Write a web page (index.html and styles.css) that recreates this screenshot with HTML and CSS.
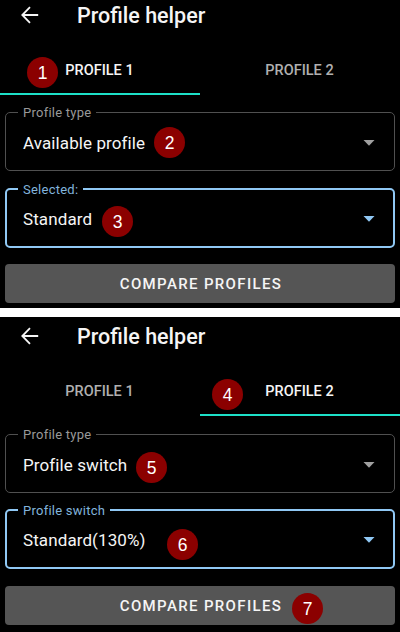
FILE: index.html
```
<!DOCTYPE html>
<html lang="en">
<head>
<meta charset="utf-8">
<title>Profile helper</title>
<link rel="stylesheet" href="styles.css">
</head>
<body>
<main>
  <section class="screen first">
    <header class="bar">
      <svg class="back" viewBox="0 0 18 18"><path d="M17.2 9H1.6M9 1.2L1.3 9L9 16.8"/></svg>
      <h1><span>Profile helper</span></h1>
    </header>
    <nav class="tabs">
      <div class="tab active"><span>PROFILE 1</span></div>
      <div class="tab"><span>PROFILE 2</span></div>
    </nav>
    <div class="form">
      <fieldset class="field">
        <legend><span>Profile type</span></legend>
        <div class="value"><span>Available profile</span><svg class="caret" viewBox="0 0 12 6"><path d="M0.5 0H11.5L6 5.7Z"/></svg></div>
      </fieldset>
      <fieldset class="field focused">
        <legend><span>Selected:</span></legend>
        <div class="value"><span>Standard</span><svg class="caret" viewBox="0 0 12 6"><path d="M0.5 0H11.5L6 5.7Z"/></svg></div>
      </fieldset>
      <button class="compare"><span>COMPARE PROFILES</span></button>
    </div>
    <b class="badge n1">1</b>
    <b class="badge n2">2</b>
    <b class="badge n3">3</b>
  </section>
  <section class="screen second">
    <header class="bar">
      <svg class="back" viewBox="0 0 18 18"><path d="M17.2 9H1.6M9 1.2L1.3 9L9 16.8"/></svg>
      <h1><span>Profile helper</span></h1>
    </header>
    <nav class="tabs">
      <div class="tab"><span>PROFILE 1</span></div>
      <div class="tab active"><span>PROFILE 2</span></div>
    </nav>
    <div class="form">
      <fieldset class="field">
        <legend><span>Profile type</span></legend>
        <div class="value"><span>Profile switch</span><svg class="caret" viewBox="0 0 12 6"><path d="M0.5 0H11.5L6 5.7Z"/></svg></div>
      </fieldset>
      <fieldset class="field focused">
        <legend><span>Profile switch</span></legend>
        <div class="value"><span>Standard(130%)</span><svg class="caret" viewBox="0 0 12 6"><path d="M0.5 0H11.5L6 5.7Z"/></svg></div>
      </fieldset>
      <button class="compare"><span>COMPARE PROFILES</span></button>
    </div>
    <b class="badge n4">4</b>
    <b class="badge n5">5</b>
    <b class="badge n6">6</b>
    <b class="badge n7">7</b>
  </section>
</main>
</body>
</html>
```
FILE: styles.css
```
* { box-sizing: border-box; }
body { margin: 0; background: #fff; font-family: Roboto, sans-serif; }
main { display: flex; flex-direction: column; gap: 9px; height: 632px; overflow: hidden; }
.screen { position: relative; background: #000; color: #f5f5f5; flex: none; }
.first { height: 308px; }
.second { height: 315px; padding-top: 4px; }
.bar { display: flex; align-items: center; height: 30px; padding-left: 21px; }
.back { width: 18px; height: 18px; margin-right: 38px; margin-top: -1px; fill: none; stroke: #f5f5f5; stroke-width: 1.8; }
h1 { margin: 0; padding-top: 2px; font-size: 21.5px; font-weight: 500; line-height: 30px; white-space: nowrap; }
.tabs { display: flex; height: 65px; padding-top: 17px; }
.tab { flex: 1; display: flex; align-items: center; justify-content: center; padding-right: 1px; font-size: 14.5px; font-weight: 500; color: #b0b0b0; border-bottom: 2px solid transparent; }
.active { color: #f5f5f5; border-bottom-color: #1de0c8; }
.form { padding: 9px 5px 0; }
.second .form { padding-top: 10px; }
.field { display: block; height: 67px; margin: 0 0 10px; padding: 0 0 0 12px; border: 1px solid #505050; border-radius: 5px; min-width: 0; }
.second .field { margin-bottom: 9px; }
.field.focused { border: 2px solid #90c8f4; padding-left: 11px; margin-bottom: 16px; }
.second .focused { margin-bottom: 17px; }
legend { height: 16px; padding: 0 5px; font-size: 13px; line-height: 18px; letter-spacing: .25px; color: #999; }
.focused legend { color: #82b4dc; }
.value { display: flex; align-items: center; justify-content: space-between; height: 45px; padding: 0 19px 0 5px; font-size: 17px; letter-spacing: .1px; }
.focused .value { height: 43px; padding-right: 18px; }
.caret { width: 12px; height: 6px; fill: #a0a0a0; }
.focused .caret { fill: #90c8f4; }
.compare { display: block; width: 100%; height: 39px; padding: 1px 0 0 2px; border: 0; border-radius: 4px; background: #555; color: #f5f5f5; font: 500 15px/38px Roboto, sans-serif; letter-spacing: 1.35px; }
.badge { position: absolute; width: 31px; height: 31px; border-radius: 50%; background: #8b0000; color: #fff; font: 400 17.5px/32px "Liberation Sans", sans-serif; text-align: center; }
.n1 { left: 27px; top: 57px; }
.n2 { left: 154px; top: 127px; }
.n3 { left: 102px; top: 206px; }
.n4 { left: 212px; top: 62px; }
.n5 { left: 136px; top: 135px; }
.n6 { left: 167px; top: 212px; }
.n7 { left: 292px; top: 276px; }
```
